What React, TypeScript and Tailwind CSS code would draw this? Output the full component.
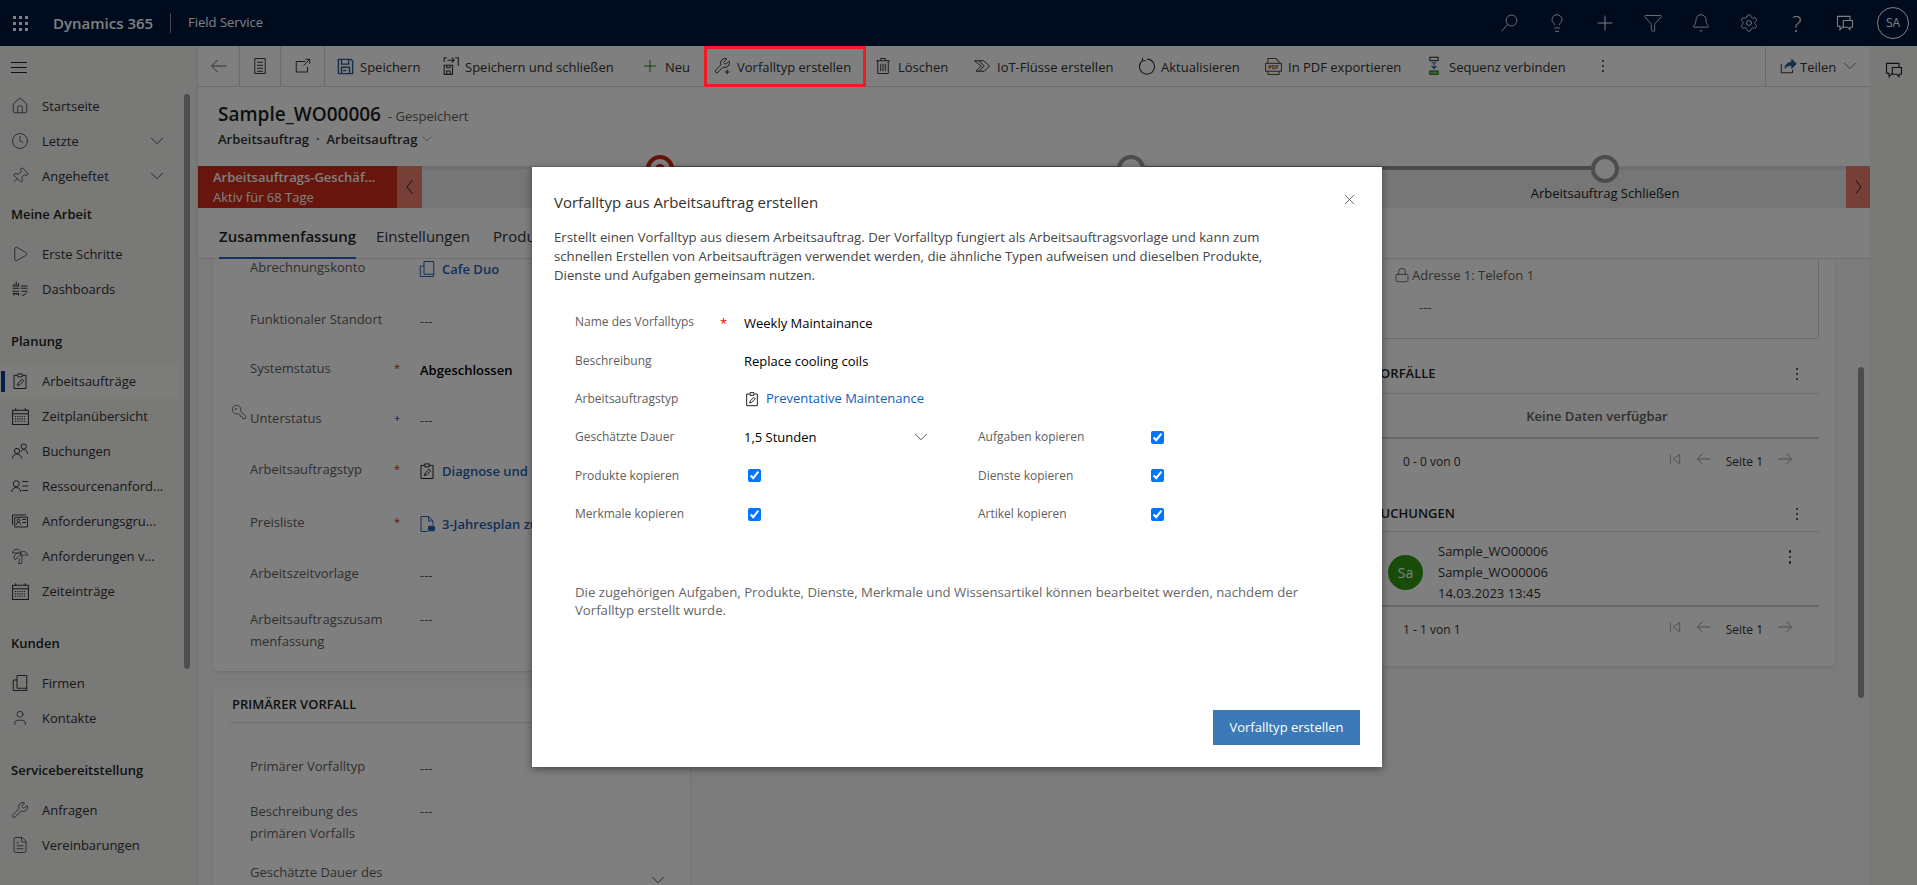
import { Bell, ChevronDown, Clock, FileText, Filter, House, KeyRound, Lightbulb, Lock, Pin, Play, Plus, Settings, TreePalm, User, Wrench, X } from "lucide-react";
import type { ReactNode } from "react";

const Svg = ({ s = 18, children, className = "" }: { s?: number; children: ReactNode; className?: string }) => (
  <svg width={s} height={s} viewBox="0 0 24 24" fill="none" stroke="currentColor" strokeWidth={1.3} className={`shrink-0 ${className}`}>
    {children}
  </svg>
);

const Chevron = ({ s = 14, className = "" }: { s?: number; className?: string }) => (
  <ChevronDown size={s + 8} strokeWidth={0.9} className={`shrink-0 ${className}`} />
);

const Kebab = ({ className = "" }: { className?: string }) => (
  <div className={`flex flex-col gap-[3px] ${className}`}>
    <span className="w-[2px] h-[2px] rounded-full bg-[#323130]" />
    <span className="w-[2px] h-[2px] rounded-full bg-[#323130]" />
    <span className="w-[2px] h-[2px] rounded-full bg-[#323130]" />
  </div>
);

const ChatIcon = ({ s = 20 }: { s?: number }) => (
  <Svg s={s}>
    <path d="M3 16V4h15v5M3 16h3v4l4-4" />
    <path d="M10 9h11v8h-3v3l-3-3h-5z" />
  </Svg>
);

const WrenchPath = "M14.7 6.3a1 1 0 0 0 0 1.4l1.6 1.6a1 1 0 0 0 1.4 0l3.77-3.77a6 6 0 0 1-7.94 7.94l-6.91 6.91a2.12 2.12 0 0 1-3-3l6.91-6.91a6 6 0 0 1 7.94-7.94l-3.76 3.76z";

const Clipboard = ({ s = 18, className = "" }: { s?: number; className?: string }) => (
  <Svg s={s} className={className}>
    <path d="M8 4.5H4V22h16V4.5h-4M9 2.5h6v4H9zM8.5 18l1-3.2 5.2-5.2 2.2 2.2-5.2 5.2z" />
  </Svg>
);

const Calendar = () => (
  <Svg s={19}>
    <path d="M2 4h20v18H2zM2 8.5h20M6 1.5V5M18 1.5V5" />
    <path d="M5 12h14M5 15h14M5 18h14" strokeDasharray="1.4 1.4" />
  </Svg>
);

const Company = ({ className = "" }: { className?: string }) => (
  <Svg s={18} className={className}>
    <path d="M3 8v14h18V2H8v17h13M3 8h5" />
  </Svg>
);

const NavItem = ({ icon, label, chevron, active }: { icon: ReactNode; label: string; chevron?: boolean; active?: boolean }) => (
  <div className={`relative flex items-center h-[35px] w-[178px] text-[13px] text-[#323130] ${active ? "bg-[#ffffff]/60" : ""}`}>
    {active && <span className="ml-px w-[4px] h-[21px] bg-[#0f3fa0]" />}
    <span className={`flex justify-center w-[20px] ${active ? "ml-[5px]" : "ml-[10px]"}`}>{icon}</span>
    <span className="ml-[12px] pt-px whitespace-nowrap">{label}</span>
    {chevron && <Chevron className="ml-auto mr-[10px]" />}
  </div>
);

const NavHead = ({ label, spaced }: { label: string; spaced?: boolean }) => (
  <div className={`flex items-center h-[43px] pl-[11px] text-[13px] font-semibold text-[#201f1e] ${spaced ? "mt-[14px]" : ""}`}>{label}</div>
);

const Sidebar = () => {
  const i = { size: 18, strokeWidth: 1 };
  return (
    <aside className="flex w-[198px] shrink-0 bg-[#f3f2f1] border-r border-[#e1dfdd]">
      <div className="w-[184px] shrink-0">
        <div className="flex items-center h-[42.5px] pl-[11px]">
          <div className="flex flex-col gap-[4px] w-[16px]">
            <span className="h-px bg-[#201f1e]" />
            <span className="h-px bg-[#201f1e]" />
            <span className="h-px bg-[#201f1e]" />
          </div>
        </div>
        <NavItem icon={<House {...i} />} label="Startseite" />
        <NavItem icon={<Clock {...i} />} label="Letzte" chevron />
        <NavItem icon={<Pin {...i} className="rotate-45" />} label="Angeheftet" chevron />
        <NavHead label="Meine Arbeit" />
        <NavItem icon={<Play {...i} />} label="Erste Schritte" />
        <NavItem
          icon={
            <Svg>
              <path d="M2 8h9M2 11h9M13 8h9M13 11h9M4 8V5M7 8V2M10 8V4M2 15h9M2 18h9M4 18v3M7 18v2M10 18v3M14 15h8M14 19l2 2 5-4" />
            </Svg>
          }
          label="Dashboards"
        />
        <NavHead label="Planung" spaced />
        <NavItem icon={<Clipboard />} label="Arbeitsaufträge" active />
        <NavItem icon={<Calendar />} label="Zeitplanübersicht" />
        <NavItem
          icon={
            <Svg>
              <circle cx="8" cy="12" r="3.5" />
              <path d="M2 22c0-3.500 3-6 6-6s6 2.500 6 6" />
              <circle cx="17" cy="6" r="3.5" />
              <path d="M13 13c1-2 2.500-3 4-3 3 0 5 2.500 5 6" />
            </Svg>
          }
          label="Buchungen"
        />
        <NavItem
          icon={
            <Svg>
              <circle cx="7" cy="9" r="4" />
              <path d="M1 20c0-4 3-6 6-6s6 2 6 6M15 6h8M15 12h8M15 18h8" />
            </Svg>
          }
          label="Ressourcenanford..."
        />
        <NavItem
          icon={
            <Svg>
              <path d="M5 7h17v13H5zM2 4h18M2 4v13" />
              <circle cx="10" cy="11" r="2" />
              <path d="M7 17c0-2 1.500-3 3-3s3 1 3 3M15 10h5M15 14h5" />
            </Svg>
          }
          label="Anforderungsgru..."
        />
        <NavItem icon={<TreePalm {...i} />} label="Anforderungen v..." />
        <NavItem icon={<Calendar />} label="Zeiteinträge" />
        <NavHead label="Kunden" spaced />
        <NavItem icon={<Company />} label="Firmen" />
        <NavItem icon={<User {...i} />} label="Kontakte" />
        <NavHead label="Servicebereitstellung" spaced />
        <NavItem icon={<Wrench {...i} />} label="Anfragen" />
        <NavItem icon={<FileText {...i} />} label="Vereinbarungen" />
      </div>
      <div className="w-[6px] h-[575px] mt-[48px] rounded-full bg-[#9b9b9b]" />
    </aside>
  );
};

const ToolBtn = ({ icon, label, w }: { icon: ReactNode; label: string; w: string }) => (
  <div className={`flex items-center pl-2 gap-[7px] h-full shrink-0 text-[13px] text-[#323130] ${w}`}>
    <span className="flex justify-center w-4">{icon}</span>
    <span className="pt-[3px] whitespace-nowrap">{label}</span>
  </div>
);

const Toolbar = () => (
  <div className="flex items-center h-[41px] shrink-0 bg-white border-b border-[#d8d8d8]">
    <div className="flex items-center justify-center w-[42px] h-full border-r border-[#d8d8d8] text-[#605e5c]">
      <Svg s={18}><path d="M22 12H3M10 4l-8 8 8 8" /></Svg>
    </div>
    <div className="flex items-center justify-center w-[41px] h-full border-r border-[#d8d8d8] text-[#323130]">
      <Svg s={18}><path d="M5 2h14v20H5zM8 7h8M8 11h8M8 15h8M8 19h8" /></Svg>
    </div>
    <div className="flex items-center justify-center w-[44px] h-full border-r border-[#d8d8d8] text-[#323130]">
      <Svg s={18}><path d="M15 6H3v14h15v-7M15 3h6v6M21 3l-8 8" /></Svg>
    </div>
    <div className="ml-[4px] flex h-full items-center">
      <ToolBtn w="w-[105px]" label="Speichern" icon={<Svg s={19} className="text-[#2a5f96]"><path d="M3 3h16l2 2v16H3zM7 3v6h9V3M7 21v-8h10v8M9 17h4" strokeWidth={1.8} /></Svg>} />
      <ToolBtn w="w-[200px]" label="Speichern und schließen" icon={<Svg s={20} className="text-[#323130]"><path d="M5 11h10v11H5zM8 11v3h4v-3M8 22v-4h4v4M5 7V2h3M18 2h4v10M9 5h8M14 2l3 3-3 3" /></Svg>} />
      <ToolBtn w="w-[72px]" label="Neu" icon={<Plus size={20} strokeWidth={1.1} className="text-[#107c10] shrink-0" />} />
      <ToolBtn w="w-[161px]" label="Vorfalltyp erstellen" icon={<Svg s={18}><path d={WrenchPath} /><path d="M19 17v6M16 20h6" /></Svg>} />
      <ToolBtn w="w-[99px]" label="Löschen" icon={<Svg s={18}><path d="M3 5h18M9 5V2h6v3M5 5v17h14V5M9 9v10M12 9v10M15 9v10" /></Svg>} />
      <ToolBtn w="w-[164px]" label="IoT-Flüsse erstellen" icon={<Svg s={18}><path d="M2 5h12l8 7-7 7H4l7-7zM8 5l7 7-7 7" /></Svg>} />
      <ToolBtn w="w-[127px]" label="Aktualisieren" icon={<Svg s={19}><path d="M7 4.500a9.500 9.500 0 1 0 6-1.800M7 1v3.800h4" /></Svg>} />
      <ToolBtn
        w="w-[161px]"
        label="In PDF exportieren"
        icon={
          <Svg s={19} className="text-[#5c4a2a]">
            <path d="M5 8V2h10l4 4v2M5 18v4h14v-4" />
            <rect x="2" y="8" width="20" height="10" />
            <text x="12" y="15.500" textAnchor="middle" fontSize="7" fontWeight="700" fill="currentColor" stroke="none">PDF</text>
          </Svg>
        }
      />
      <ToolBtn
        w="w-[161px]"
        label="Sequenz verbinden"
        icon={
          <Svg s={20}>
            <rect x="7" y="1.500" width="10" height="4" />
            <path d="M12 8v7M9 12l3 3 3-3M9 8h6" stroke="#0f5ebd" />
            <rect x="7" y="18" width="10" height="4" stroke="#107c10" fill="#7fc47f" />
          </Svg>
        }
      />
      <Kebab className="ml-[23px]" />
    </div>
    <div className="ml-auto flex items-center h-full w-[105px] border-l border-[#d8d8d8] pl-[13px] text-[13px] text-[#323130]">
      <Svg s={18} className="text-[#2a5f96] mr-[3px]"><path d="M3 9v12h15v-4" stroke="#323130" /><path d="M8 15c0-5 4-8 9-8V3l6 6-6 6v-4c-4 0-7 1-9 4z" fill="currentColor" /></Svg>
      <span className="pt-[3px]">Teilen</span>
      <Chevron className="ml-[3px] text-[#605e5c]" />
    </div>
  </div>
);

const ProcessBar = () => (
  <div className="flex h-[42px] shrink-0">
    <div className="flex flex-col justify-center w-[200px] pl-[15px] bg-[#d02c1a] text-white">
      <span className="text-[13px] font-semibold leading-[20px] whitespace-nowrap">Arbeitsauftrags-Geschäf...</span>
      <span className="text-[13px] leading-[20px]">Aktiv für 68 Tage</span>
    </div>
    <div className="flex items-center justify-center w-[25px] bg-[#ec8070] text-[#201f1e]">
      <Svg s={18}><path d="M15 3l-7 9 7 9" /></Svg>
    </div>
    <div className="relative flex flex-1 bg-[#ececec] border-t-[4px] border-[#dedede]">
      <div className="absolute -top-[4px] left-[238px] w-[945px] h-[4px] bg-[#949494]" />
      <div className="relative flex flex-col items-center w-[476px]">
        <span className="flex items-center justify-center -mt-[15px] w-[28px] h-[28px] rounded-full border-[4px] border-[#c8281a] bg-white">
          <span className="w-[10px] h-[10px] rounded-full bg-[#c8281a]" />
        </span>
      </div>
      <div className="relative flex flex-col items-center w-[466px]">
        <span className="-mt-[15px] w-[28px] h-[28px] rounded-full border-[4px] border-[#9a9a9a] bg-white" />
      </div>
      <div className="relative flex flex-col items-center w-[482px]">
        <span className="-mt-[15px] w-[28px] h-[28px] rounded-full border-[4px] border-[#9a9a9a] bg-white" />
        <span className="text-[13px] mt-[1px] text-[#201f1e] whitespace-nowrap">Arbeitsauftrag Schließen</span>
      </div>
    </div>
    <div className="flex items-center justify-center w-[24px] bg-[#ec8070] text-[#201f1e]">
      <Svg s={18}><path d="M9 3l7 9-7 9" /></Svg>
    </div>
  </div>
);

const Field = ({ label, h, req, children }: { label: ReactNode; h: string; req?: string; children: ReactNode }) => (
  <div className={`flex text-[13px] leading-[22px] ${h}`}>
    <div className="w-[136px] ml-[37px] shrink-0 whitespace-nowrap text-[#605e5c]">{label}</div>
    <div className={`w-[34px] shrink-0 pl-[8px] text-[11px] ${req === "blue" ? "text-[#0000d0]" : "text-[#c8281a]"}`}>{req ? (req === "blue" ? "+" : "*") : ""}</div>
    <div className="pt-[2px] whitespace-nowrap">{children}</div>
  </div>
);

const Empty = () => <span className="text-[#605e5c]">---</span>;

const LinkVal = ({ icon, text }: { icon: ReactNode; text: string }) => (
  <span className="flex items-center gap-[8px] font-semibold text-[#1f5fb0]">
    <span className="flex justify-center w-[14px] text-[#201f1e]">{icon}</span>
    {text}
  </span>
);

const LeftCards = () => (
  <div className="w-[477px] ml-[15px] -mt-[3px] shrink-0">
    <div className="h-[415px] rounded-[4px] bg-white shadow-sm">
      <Field label="Abrechnungskonto" h="h-[52px]">
        <LinkVal text="Cafe Duo" icon={<Company className="text-[#1f5fb0]" />} />
      </Field>
      <Field label="Funktionaler Standort" h="h-[49px]"><Empty /></Field>
      <Field label="Systemstatus" h="h-[50px]" req="red"><span className="font-semibold text-black">Abgeschlossen</span></Field>
      <Field
        label={
          <span className="relative flex">
            <KeyRound size={16} strokeWidth={1} className="absolute -left-[19px] -top-[3px] -scale-x-100 text-[#323130]" />
            Unterstatus
          </span>
        }
        h="h-[51px]"
        req="blue"
      >
        <Empty />
      </Field>
      <Field label="Arbeitsauftragstyp" h="h-[53px]" req="red"><LinkVal text="Diagnose und" icon={<Clipboard />} /></Field>
      <Field label="Preisliste" h="h-[51px]" req="red">
        <LinkVal text="3-Jahresplan zu" icon={<Svg s={18} className="text-[#1f5fb0]"><path d="M13 22H4V2h10l6 6v5M14 2v6h6" /><rect x="14" y="15" width="8" height="6" rx="1" fill="currentColor" /></Svg>} />
      </Field>
      <Field label="Arbeitszeitvorlage" h="h-[46px]"><Empty /></Field>
      <Field label={<>Arbeitsauftragszusam<br />menfassung</>} h="h-[63px]"><span className="-mt-[2px] block"><Empty /></span></Field>
    </div>
    <div className="mt-[16px] rounded-[4px] bg-white h-[300px] shadow-sm">
      <div className="flex items-center h-[36px] mx-[17px] pl-[2px] border-b border-[#e1dfdd] text-[13px] font-semibold text-[#201f1e]">PRIMÄRER VORFALL</div>
      <div className="pt-[32px]">
        <Field label="Primärer Vorfalltyp" h="h-[45px]"><Empty /></Field>
        <Field label={<>Beschreibung des<br />primären Vorfalls</>} h="h-[61px]"><span className="-mt-[2px] block"><Empty /></span></Field>
        <Field label="Geschätzte Dauer des" h="h-[22px]">
          <Chevron className="ml-[227px] mt-[6px] text-[#323130]" />
        </Field>
      </div>
    </div>
  </div>
);

const Pager = ({ text }: { text: string }) => (
  <div className="flex items-center h-[40px] pl-[32px] pr-[26px] text-[12px] text-[#323130]">
    <span className="pt-[6px]">{text}</span>
    <div className="ml-auto flex items-center text-[#8a8886]">
      <Svg s={14}><path d="M4 4v16M20 4L9 12l11 8z" /></Svg>
      <Svg s={16} className="ml-[14px]"><path d="M22 12H3M10 4l-8 8 8 8" /></Svg>
      <span className="ml-[14px] pt-[6px] text-[#323130]">Seite 1</span>
      <Svg s={16} className="ml-[14px]"><path d="M2 12h19M14 4l8 8-8 8" /></Svg>
    </div>
  </div>
);

const SectionHead = ({ title, h, pb }: { title: string; h: string; pb: string }) => (
  <div className={`flex items-end justify-between pl-px pr-[21px] border-b border-[#dcdcdc] text-[13px] font-semibold leading-[22px] text-[#201f1e] ${h} ${pb}`}>
    {title}
    <Kebab className="mb-[4px]" />
  </div>
);

const RightCard = () => (
  <div className="w-[480px] ml-auto h-[407px] shrink-0 px-[16px] rounded-[4px] bg-white shadow-sm">
    <div className="h-[80px] pl-[22px] border border-t-0 border-[#d8d8d8] rounded-b-[4px] text-[13px] text-[#605e5c]">
      <div className="flex items-center gap-[2px] pt-[5px] h-[27px] leading-[22px]">
        <Lock size={16} strokeWidth={1} className="text-[#323130]" />
        Adresse 1: Telefon 1
      </div>
      <div className="pl-[25px] pt-[12px]">---</div>
    </div>
    <SectionHead title="VORFÄLLE" h="h-[55px]" pb="pb-[9px]" />
    <div className="flex items-center justify-center h-[45px] pl-[4px] pt-[2px] border-b-2 border-[#d0d0d0] text-[13px] font-semibold text-[#605e5c]">Keine Daten verfügbar</div>
    <Pager text="0 - 0 von 0" />
    <SectionHead title="BUCHUNGEN" h="h-[53px]" pb="pb-[7px]" />
    <div className="flex items-center h-[75px] pl-[17px] pt-[7px] border-b-2 border-[#d0d0d0]">
      <span className="flex items-center justify-center w-[35px] h-[35px] rounded-full bg-[#2f9a10] text-[14px] text-white">Sa</span>
      <div className="ml-[15px] text-[13px] leading-[21px] text-[#323130]">
        <div>Sample_WO00006</div>
        <div>Sample_WO00006</div>
        <div>14.03.2023 13:45</div>
      </div>
      <Kebab className="ml-auto mr-[28px] mb-[30px] [&>span]:w-[2.5px] [&>span]:h-[2.5px]" />
    </div>
    <Pager text="1 - 1 von 1" />
  </div>
);

const Check = ({ className = "" }: { className?: string }) => (
  <input type="checkbox" checked readOnly className={`block w-[13px] h-[13px] accent-[#0075ff] ${className}`} />
);

const Row = ({ a, b, c, d }: { a: string; b: ReactNode; c?: string; d?: boolean }) => (
  <div className="flex items-center h-[38.4px]">
    <div className="w-[169px] shrink-0 text-[#605e5c]">{a}</div>
    <div className="w-[234px] shrink-0">{b}</div>
    {c && <div className="w-[173px] shrink-0 text-[#605e5c]">{c}</div>}
    {d && <Check />}
  </div>
);

const Modal = () => (
  <div className="absolute z-10 left-[532px] top-[167px] flex flex-col w-[850px] h-[600px] px-[22px] pb-[22px] bg-white text-[12px] shadow-[0_2px_8px_rgba(0,0,0,0.45)]">
    <div className="flex items-start justify-between pt-[24px]">
      <h1 className="text-[15px] leading-[22px] text-[#323130]">Vorfalltyp aus Arbeitsauftrag erstellen</h1>
      <X size={17} strokeWidth={1} className="mr-[2px] text-[#323130]" />
    </div>
    <p className="mt-[15px] w-[722px] text-[13.2px] leading-[19px] text-[#444]">
      Erstellt einen Vorfalltyp aus diesem Arbeitsauftrag. Der Vorfalltyp fungiert als Arbeitsauftragsvorlage und kann zum schnellen Erstellen von Arbeitsaufträgen verwendet werden, die ähnliche Typen aufweisen und dieselben Produkte, Dienste und Aufgaben gemeinsam nutzen.
    </p>
    <div className="mt-[18px] pl-[21px]">
      <Row
        a="Name des Vorfalltyps"
        b={<span className="flex text-[13px] pt-[3px] font-medium text-black"><span className="-ml-[24px] w-[24px] font-normal text-[#e00]">*</span>Weekly Maintainance</span>}
      />
      <Row a="Beschreibung" b={<span className="block text-[13px] pt-[3px] font-medium text-black">Replace cooling coils</span>} />
      <Row
        a="Arbeitsauftragstyp"
        b={
          <span className="flex items-center gap-[6px] text-[13px] text-[#0f5ebd] font-medium">
            <Clipboard s={16} className="text-black" />
            Preventative Maintenance
          </span>
        }
      />
      <Row
        a="Geschätzte Dauer"
        b={
          <span className="flex items-center w-[188px] justify-between text-[13px] font-medium text-black">
            1,5 Stunden
            <ChevronDown size={22} strokeWidth={0.9} className="text-[#323130]" />
          </span>
        }
        c="Aufgaben kopieren"
        d
      />
      <Row a="Produkte kopieren" b={<Check className="ml-[4px]" />} c="Dienste kopieren" d />
      <Row a="Merkmale kopieren" b={<Check className="ml-[4px]" />} c="Artikel kopieren" d />
    </div>
    <p className="mt-[50px] ml-[21px] w-[745px] text-[13.2px] leading-[18px] text-[#666]">
      Die zugehörigen Aufgaben, Produkte, Dienste, Merkmale und Wissensartikel können bearbeitet werden, nachdem der Vorfalltyp erstellt wurde.
    </p>
    <button className="mt-auto self-end flex items-center justify-center w-[147px] h-[35px] bg-[#3c79b8] text-white text-[13px]">Vorfalltyp erstellen</button>
  </div>
);

export default function App() {
  return (
    <div className="relative w-[1917px] h-[885px] overflow-hidden flex flex-col bg-[#f8f8f8] font-['Open_Sans',sans-serif]">
      <header className="flex items-center h-[46px] shrink-0 bg-[#00163c] text-white">
        <div className="grid grid-cols-3 gap-[3px] ml-[13px] w-[15px]">
          {Array.from({ length: 9 }).map((_, n) => (
            <span key={n} className="w-[3px] h-[3px] bg-white" />
          ))}
        </div>
        <span className="ml-[25px] w-[117px] text-[15px] font-semibold">Dynamics 365</span>
        <span className="h-[20px] border-l border-[#7a8aa8]" />
        <span className="ml-[17px] text-[13px]">Field Service</span>
        <div className="ml-auto flex items-center h-full">
          {[
            <Svg s={20} className="[stroke-width:1]"><circle cx="15" cy="9" r="6.500" /><path d="M10.500 13.500L3 22" /></Svg>,
            <Lightbulb size={20} strokeWidth={1} />,
            <Plus size={24} strokeWidth={1} />,
            <Filter size={20} strokeWidth={1} />,
            <Bell size={20} strokeWidth={1} />,
            <Settings size={20} strokeWidth={1} />,
            <span className="text-[22px] font-light leading-none">?</span>,
            <ChatIcon />,
          ].map((ic, n) => (
            <span key={n} className="flex items-center justify-center w-[48px]">{ic}</span>
          ))}
          <span className="flex items-center justify-center ml-[8px] mr-[8px] w-[32px] h-[32px] rounded-full border border-white text-[12px]">SA</span>
        </div>
      </header>
      <div className="flex flex-1 min-h-0">
        <Sidebar />
        <main className="flex flex-col flex-1 min-w-0">
          <Toolbar />
          <div className="h-[79px] shrink-0 pl-[20px] pt-[13px] bg-white">
            <div className="flex items-baseline leading-[28px]">
              <span className="text-[19px] font-semibold text-[#201f1e]">Sample_WO00006</span>
              <span className="ml-[7px] text-[13px] text-[#605e5c]">- Gespeichert</span>
            </div>
            <div className="flex items-center text-[13px] font-semibold leading-[18px] text-[#323130]">
              Arbeitsauftrag
              <span className="mx-[7px]">·</span>
              Arbeitsauftrag
              <Chevron s={8} className="ml-[2px] text-[#605e5c]" />
            </div>
          </div>
          <ProcessBar />
          <div className="flex items-end h-[51px] shrink-0 pl-[21px] bg-white border-b border-[#e1dfdd] text-[15px] text-[#323130]">
            <span className="flex items-center h-full pt-[6px] border-b-2 border-[#2d62c0] font-semibold text-[#201f1e] mb-[-1px]">Zusammenfassung</span>
            <span className="flex items-center h-full pt-[6px] ml-[20px]">Einstellungen</span>
            <span className="flex items-center h-full pt-[6px] ml-[23px]">Produkte</span>
          </div>
          <div className="flex flex-1 min-h-0 overflow-hidden">
            <LeftCards />
            <RightCard />
            <div className="w-[35px] shrink-0 pl-[23px] pt-[108px]">
              <div className="w-[6px] h-[331px] rounded-full bg-[#9b9b9b]" />
            </div>
          </div>
        </main>
        <aside className="flex justify-center w-[47px] shrink-0 pt-[14px] bg-[#f3f2f1] text-[#201f1e]">
          <ChatIcon />
        </aside>
      </div>
      <div className="absolute inset-0 bg-black/50" />
      <div className="absolute z-10 left-[704px] top-[46px] w-[162px] h-[41px] border-[3px] border-[#ee1c25]" />
      <Modal />
    </div>
  );
}
